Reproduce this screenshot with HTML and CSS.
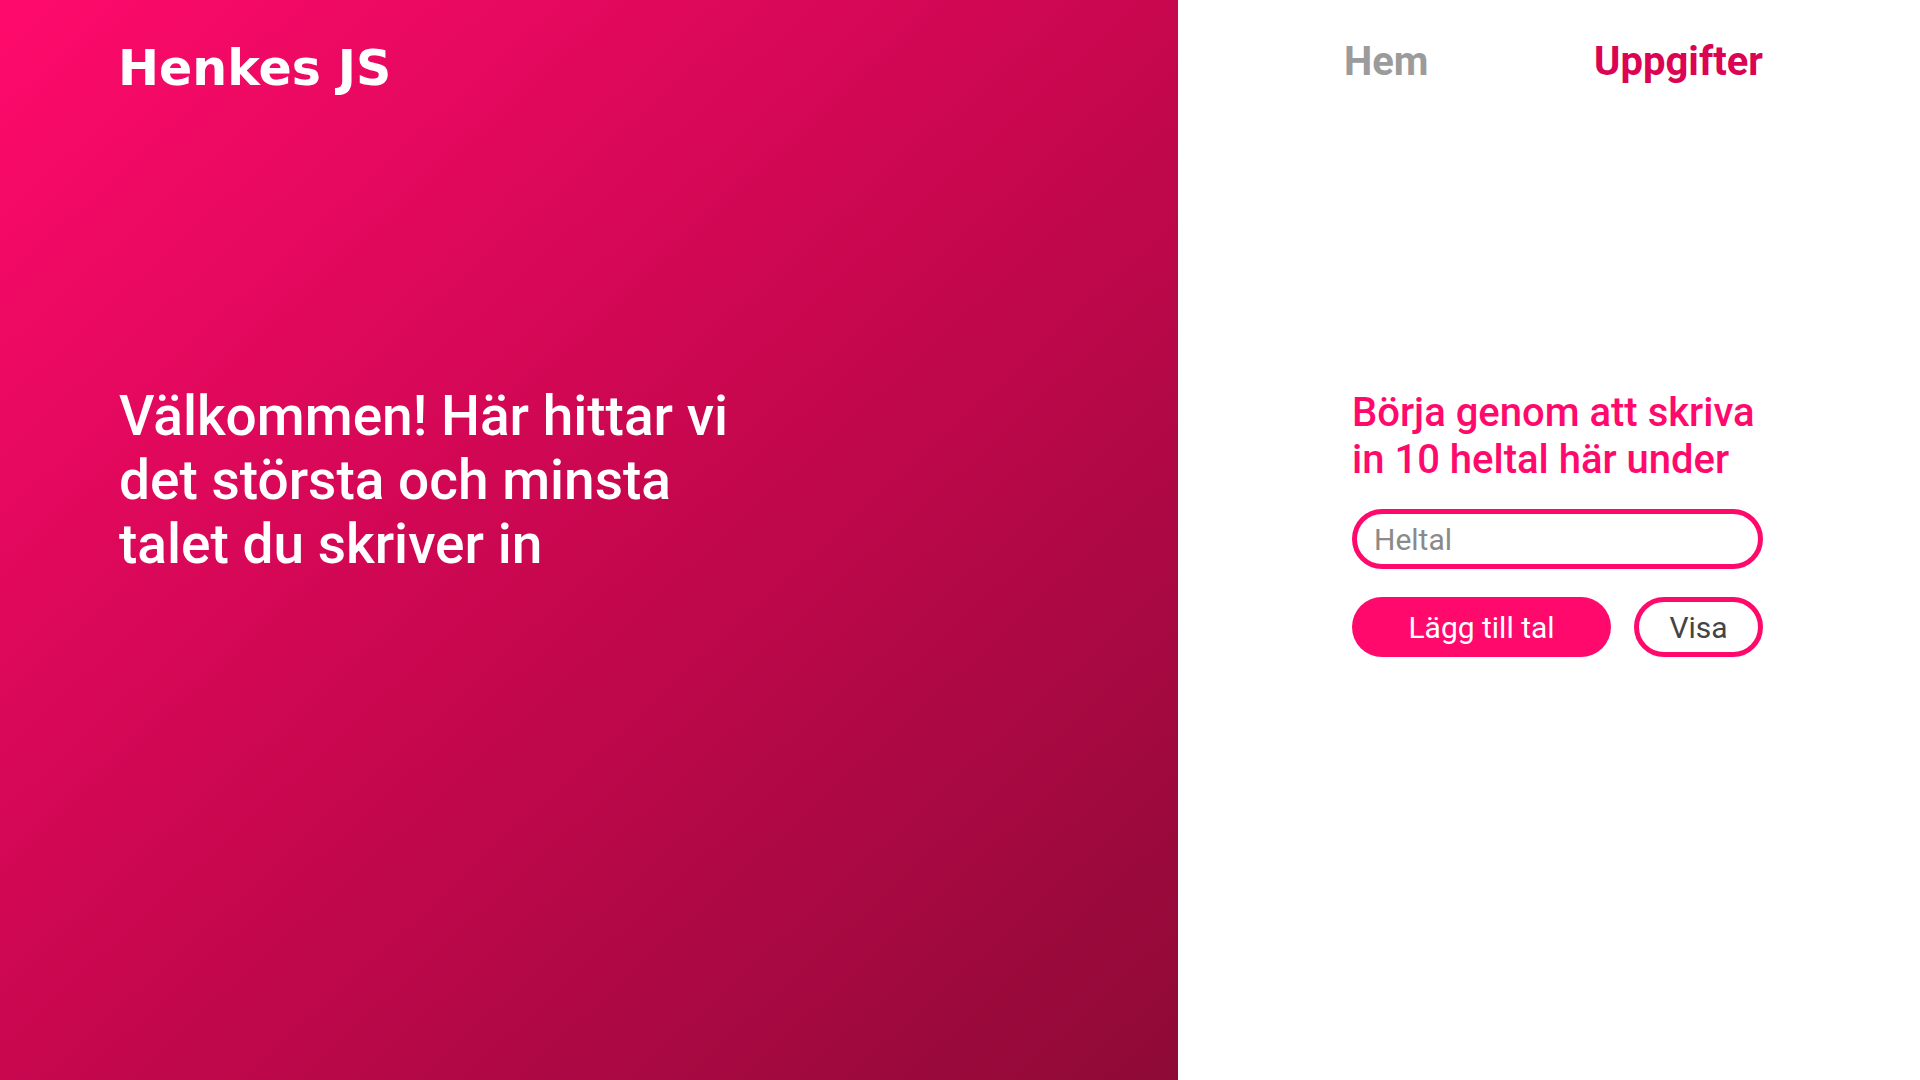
FILE: index.html
```html
<!DOCTYPE html>
<html lang="sv">
<head>
<meta charset="utf-8">
<title>Henkes JS</title>
<link rel="stylesheet" href="styles.css">
</head>
<body>
<div class="page">
  <section class="hero">
    <div class="logo">Henkes JS</div>
    <h1 class="welcome">Välkommen! Här hittar vi det största och minsta talet du skriver in</h1>
  </section>
  <section class="side">
    <div class="column">
      <nav class="nav">
        <a class="nav-link" href="#">Hem</a>
        <a class="nav-link active" href="#">Uppgifter</a>
      </nav>
      <h2 class="prompt">Börja genom att skriva in 10 heltal här under</h2>
      <input class="field" type="text" placeholder="Heltal">
      <div class="actions">
        <button class="btn btn-primary">Lägg till tal</button>
        <button class="btn btn-outline">Visa</button>
      </div>
    </div>
  </section>
</div>
</body>
</html>
```

FILE: styles.css
```css
* { box-sizing: border-box; }
html, body { margin: 0; padding: 0; }
body {
  font-family: Roboto, "Liberation Sans", sans-serif;
  width: 1920px;
  height: 1080px;
  overflow: hidden;
}
.page {
  display: flex;
  height: 1080px;
}
.hero {
  width: 1178px;
  flex: none;
  height: 1080px;
  background: linear-gradient(to bottom right, #ff0a6c 0%, #c8074f 50%, #8e0a36 100%);
  padding: 41px 0 0 119px;
  color: #fff;
}
.logo {
  font-family: "DejaVu Sans", sans-serif;
  font-weight: 700;
  font-size: 49px;
  line-height: 55px;
  margin-left: -1px;
}
.welcome {
  margin: 288px 0 0 0;
  font-size: 55px;
  line-height: 64px;
  font-weight: 500;
  max-width: 640px;
}
.side {
  flex: 1;
  background: #fff;
  padding: 38px 0 0 174px;
}
.column {
  width: 411px;
  display: flex;
  flex-direction: column;
}
.nav {
  display: flex;
  justify-content: space-between;
  margin: 0 0 0 -8px;
}
.nav-link {
  font-size: 40px;
  line-height: 47px;
  font-weight: 700;
  color: #9b9b9b;
  text-decoration: none;
}
.nav-link.active { color: #da0452; }
.prompt {
  margin: 304px 0 0 0;
  font-size: 40px;
  line-height: 47px;
  font-weight: 500;
  color: #ff0a6c;
}
.field {
  margin-top: 26px;
  width: 411px;
  height: 60px;
  border: 5px solid #ff0a6c;
  border-radius: 30px;
  padding: 0 17px;
  font-family: Roboto, sans-serif;
  font-size: 30px;
  color: #333;
  outline: none;
  background: #fff;
}
.field::placeholder { color: #8a8a8a; }
.actions {
  margin-top: 28px;
  display: flex;
  justify-content: space-between;
}
.btn {
  height: 60px;
  border-radius: 30px;
  font-family: Roboto, sans-serif;
  font-size: 30px;
  font-weight: 400;
  padding: 0;
  cursor: pointer;
}
.btn-primary {
  width: 259px;
  background: #ff0a6c;
  border: none;
  color: #fff;
}
.btn-outline {
  width: 129px;
  background: #fff;
  border: 5px solid #ff0a6c;
  color: #444;
}
```
